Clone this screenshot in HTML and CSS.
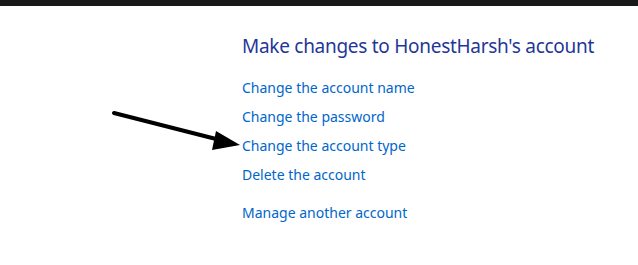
FILE: index.html
```html
<!DOCTYPE html>
<html lang="en">
<head>
<meta charset="UTF-8">
<title>Manage account</title>
<link rel="stylesheet" href="styles.css">
</head>
<body>
<div class="topbar"></div>
<div class="page">
    <!-- Account tasks -->
    <div class="tasks">
        <h1 class="title">Make changes to HonestHarsh's account</h1>
        <ul class="links">
            <li><a href="#">Change the account name</a></li>
            <li><a href="#">Change the password</a></li>
            <li><a href="#">Change the account type</a></li>
            <li><a href="#">Delete the account</a></li>
        </ul>
        <a class="other" href="#">Manage another account</a>
    </div>

    <!-- annotation arrow -->
    <svg class="arrow" width="140" height="50" viewBox="0 0 140 50">
        <line x1="2" y1="3" x2="108" y2="30" stroke="#000" stroke-width="4" stroke-linecap="round"/>
        <polygon points="128,35 104,21 100,40" fill="#000"/>
    </svg>
</div>
</body>
</html>
```

FILE: styles.css
```css
body {
    margin: 0;
    background: #fff;
    font-family: "Segoe UI", "Noto Sans", sans-serif;
}
.topbar {
    height: 6px;
    background: #181818;
}
.page {
    position: relative;
    height: 259px;
}
.tasks {
    padding-left: 242px;
    padding-top: 26px;
}
.title {
    margin: 0 0 13px 0;
    font-size: 19px;
    font-weight: normal;
    letter-spacing: -0.28px;
    color: #1f3796;
    line-height: 28px;
}
.links {
    list-style: none;
    margin: 0;
    padding: 0;
}
.links li {
    height: 29px;
    line-height: 29px;
}
a {
    color: #0066cc;
    text-decoration: none;
    font-size: 14px;
}
.other {
    display: block;
    margin-top: 9px;
    line-height: 29px;
}
.arrow {
    position: absolute;
    left: 112px;
    top: 104px;
}
```
